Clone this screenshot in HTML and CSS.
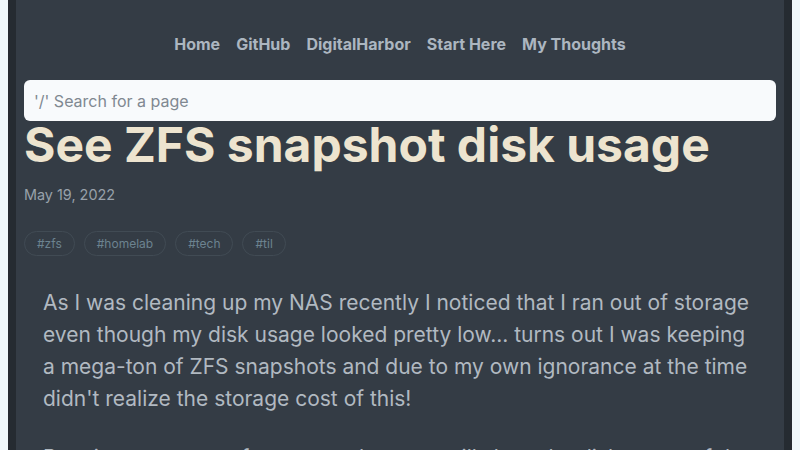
FILE: index.html
```html
<!DOCTYPE html>
<html lang="en">
<head>
    <meta charset="UTF-8">
    <meta name="viewport" content="width=device-width, initial-scale=1.0">
    <title>See ZFS snapshot disk usage</title>
    <link rel="stylesheet" href="styles.css">
</head>
<body>
    <div class="page">
        <header class="site-header">
            <nav class="site-nav">
                <a href="#">Home</a>
                <a href="#">GitHub</a>
                <a href="#">DigitalHarbor</a>
                <a href="#">Start Here</a>
                <a href="#">My Thoughts</a>
            </nav>
            <input type="text" class="search-input" placeholder="'/' Search for a page">
        </header>

        <main>
            <h1 class="post-title">See ZFS snapshot disk usage</h1>
            <div class="post-date">May 19, 2022</div>

            <div class="tag-list">
                <a href="#" class="tag">#zfs</a>
                <a href="#" class="tag">#homelab</a>
                <a href="#" class="tag">#tech</a>
                <a href="#" class="tag">#til</a>
            </div>

            <article class="post-body">
                <p>As I was cleaning up my NAS recently I noticed that I ran out of storage even though my disk usage looked pretty low... turns out I was keeping a mega-ton of ZFS snapshots and due to my own ignorance at the time didn't realize the storage cost of this!</p>
                <p>Running one more zfs command as root will show the disk usage of the datasets and their snapshots.</p>
            </article>
        </main>
    </div>
</body>
</html>
```

FILE: styles.css
```css
body {
    font-family: 'Inter', 'Noto Sans', sans-serif;
    margin: 0;
    padding: 0;
    background-color: #eff8fb;
}

.page {
    margin: 0 8px;
    padding: 0 8px;
    min-height: 100vh;
    background-color: #343c45;
    border-left: 8px solid #252b31;
    border-right: 8px solid #252b31;
}

.site-header {
    padding-top: 32px;
}

.site-nav {
    display: flex;
    justify-content: center;
    gap: 16px;
    margin-bottom: 24px;
}

.site-nav a {
    font-size: 16px;
    line-height: 24px;
    font-weight: 700;
    color: #acb6c0;
    text-decoration: none;
}

.search-input {
    display: block;
    box-sizing: border-box;
    width: 100%;
    height: 41px;
    padding: 0 10px;
    border: none;
    border-radius: 6px;
    background: #f8fafc;
    font-family: inherit;
    font-size: 16px;
    color: #333;
}

.search-input::placeholder {
    color: #808891;
}

.post-title {
    margin: 0;
    font-size: 48px;
    line-height: 48px;
    font-weight: 700;
    color: #ede4cf;
}

.post-date {
    margin-top: 16px;
    font-size: 14.4px;
    line-height: 20px;
    color: #98a1aa;
}

.tag-list {
    display: flex;
    gap: 9px;
    margin-top: 26px;
}

.tag {
    padding: 4px 12px;
    border: 1px solid #414b54;
    border-radius: 999px;
    font-size: 12px;
    line-height: 15px;
    color: #6c8390;
    text-decoration: none;
}

.post-body {
    padding: 0 19px;
    margin-top: 31px;
}

.post-body p {
    margin: 0 0 27px;
    font-size: 21px;
    line-height: 32px;
    color: #b1b9c1;
}
```
